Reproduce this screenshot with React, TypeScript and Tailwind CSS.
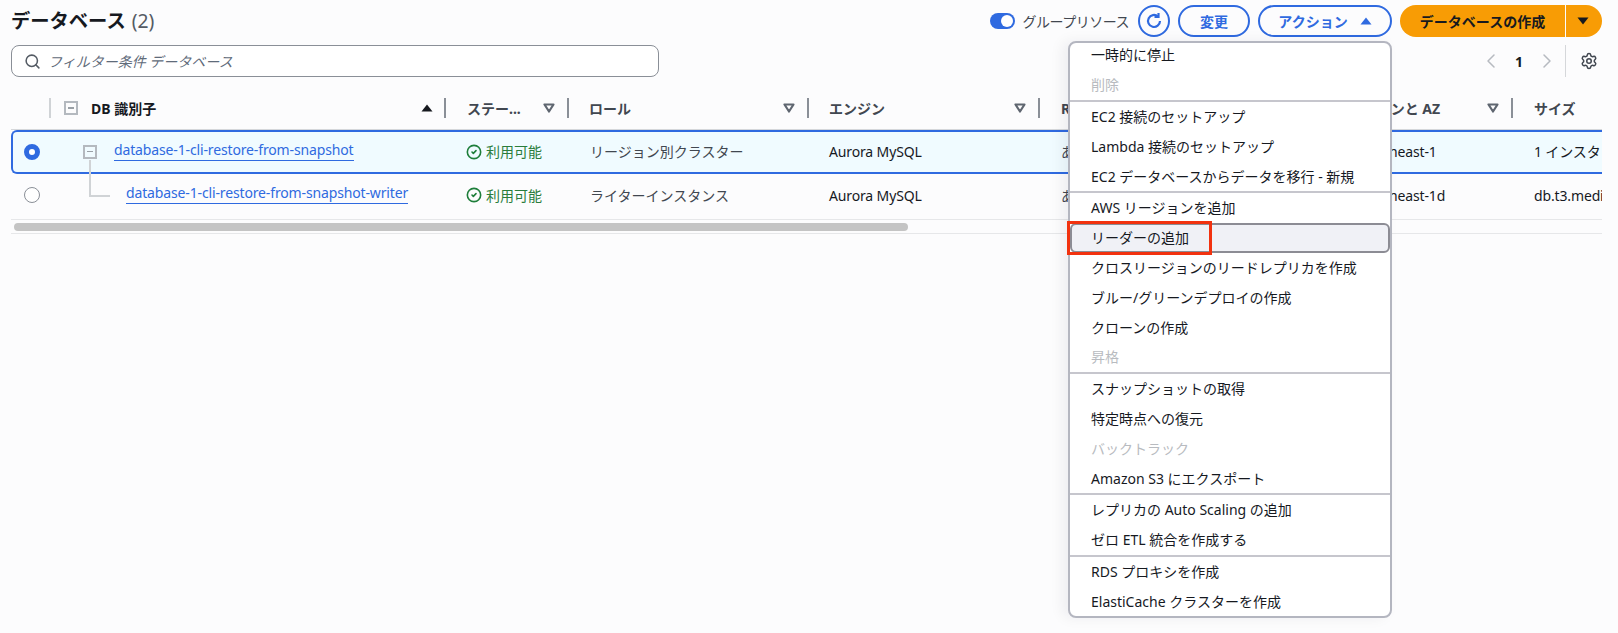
import { ChevronLeft, ChevronRight, Search, Settings, CircleCheck } from 'lucide-react'

const font = { className: "font-['Noto_Sans','Noto_Sans_CJK_JP',sans-serif]" }

const columns = [
  { label: 'ステー...', width: 'w-[123px]', pad: 'pl-[21px]' },
  { label: 'ロール', width: 'w-[240px]', pad: 'pl-[20px]' },
  { label: 'エンジン', width: 'w-[231px]', pad: 'pl-[20px]' },
  { label: 'R', width: 'w-[271px]', pad: 'pl-[21px]' },
  { label: 'リージョンと AZ', width: 'w-[202px]', pad: 'pl-[24px]' },
]

const menuGroups = [
  [{ label: '一時的に停止' }, { label: '削除', disabled: true }],
  [
    { label: 'EC2 接続のセットアップ' },
    { label: 'Lambda 接続のセットアップ' },
    { label: 'EC2 データベースからデータを移行 - 新規' },
  ],
  [
    { label: 'AWS リージョンを追加' },
    { label: 'リーダーの追加', hover: true },
    { label: 'クロスリージョンのリードレプリカを作成' },
    { label: 'ブルー/グリーンデプロイの作成' },
    { label: 'クローンの作成' },
    { label: '昇格', disabled: true },
  ],
  [
    { label: 'スナップショットの取得' },
    { label: '特定時点への復元' },
    { label: 'バックトラック', disabled: true },
    { label: 'Amazon S3 にエクスポート' },
  ],
  [{ label: 'レプリカの Auto Scaling の追加' }, { label: 'ゼロ ETL 統合を作成する' }],
  [{ label: 'RDS プロキシを作成' }, { label: 'ElastiCache クラスターを作成' }],
]

function SortDown() {
  return (
    <svg width="12" height="10" viewBox="0 0 12 10" className="text-[#5f6670]">
      <path d="M1.5 1.5h9L6 8.5z" fill="none" stroke="currentColor" strokeWidth="2.2" strokeLinejoin="round" />
    </svg>
  )
}

function Triangle({ up, className }: { up?: boolean; className?: string }) {
  return (
    <svg width="12" height="8" viewBox="0 0 12 8" className={className}>
      <path d={up ? 'M6 0.5l5.5 7H.5z' : 'M.5.5h11L6 7.5z'} fill="currentColor" />
    </svg>
  )
}

function ExpandBox({ className }: { className?: string }) {
  return (
    <span className={`flex h-[14px] w-[14px] items-center justify-center border-2 border-[#b4b9bf] ${className ?? ''}`}>
      <span className="h-[1.5px] w-[6px] bg-[#9aa0a6]" />
    </span>
  )
}

function Row({
  selected,
  radio,
  name,
  role,
  region,
  size,
}: {
  selected?: boolean
  radio: React.ReactNode
  name: React.ReactNode
  role: string
  region: string
  size: string
}) {
  return (
    <div
      className={`flex items-center text-[14px] text-[#16191f] ${
        selected
          ? 'relative z-10 h-[44px] rounded-l-[6px] border-y-2 border-l-2 border-[#2f6ae0] bg-[#f0fbff] pb-[1px]'
          : 'h-[46px] border-b border-[#e6e7e9] pb-[3px]'
      }`}
    >
      {radio}
      {name}
      <div className="flex w-[123px] items-center gap-[3px] pl-[20px]">
        <CircleCheck size={16} strokeWidth={2.4} className="text-[#1e7e3a]" />
        <span className="ml-[1px] text-[#2a7d3c]">利用可能</span>
      </div>
      <div className="w-[240px] pl-[21px] text-[#414750]">{role}</div>
      <div className="w-[231px] pl-[20px] tracking-[-0.14px] text-[#16191f]">Aurora MySQL</div>
      <div className="w-[271px] pl-[21px] text-[#414750]">あり</div>
      <div className="w-[202px] pl-[30px] tracking-[-0.14px] whitespace-nowrap">{region}</div>
      <div className="min-w-0 flex-1 overflow-hidden pl-[21px] tracking-[-0.14px] whitespace-nowrap">{size}</div>
    </div>
  )
}

export default function App() {
  return (
    <div className={`relative h-[633px] w-[1618px] overflow-hidden bg-[#fcfcfd] pl-[11px] pr-[16px] ${font.className}`}>
      {/* Top bar */}
      <div className="flex h-[45px] items-center justify-between pb-[3px]">
        <h1 className="text-[19.3px] font-bold text-[#16191f]">
          データベース <span className="ml-[1px] font-normal text-[#545b64]">(2)</span>
        </h1>
        <div className="flex items-center text-[14px]">
          <span className="flex h-[16px] w-[25px] items-center justify-end rounded-full bg-[#2f6ae0] pr-[2px]">
            <span className="h-[12px] w-[12px] rounded-full bg-white" />
          </span>
          <span className="ml-[8px] tracking-[-0.5px] text-[#414750]">グループリソース</span>
          <button className="ml-[9px] flex h-[32px] w-[32px] items-center justify-center rounded-full border-2 border-[#2f6ae0] text-[#2f6ae0]">
            <svg width="18" height="18" viewBox="0 0 18 18" fill="none" stroke="currentColor" strokeWidth="2.2">
              <path d="M15 9a6 6 0 1 1-2-4.5" />
              <path d="M13.5 1v4h-4" />
            </svg>
          </button>
          <button className="ml-[8px] h-[32px] w-[72px] rounded-full border-2 border-[#2f6ae0] font-bold text-[#2f6ae0]">変更</button>
          <button className="ml-[8px] flex h-[32px] w-[134px] items-center justify-center gap-[12px] rounded-full border-2 border-[#2f6ae0] font-bold text-[#2f6ae0]">
            アクション
            <Triangle up />
          </button>
          <div className="ml-[8px] flex h-[32px] font-bold text-[#16191f]">
            <button className="w-[165px] rounded-l-full bg-[#f89c05]">データベースの作成</button>
            <button className="ml-[1px] flex w-[36px] items-center justify-center rounded-r-full bg-[#f89c05] pr-[2px]">
              <Triangle />
            </button>
          </div>
        </div>
      </div>

      {/* Filter */}
      <div className="flex h-[32px] items-center justify-between">
        <div className="flex h-[32px] w-[648px] items-center gap-[7px] rounded-[8px] border border-[#8a8f97] bg-white px-[12px]">
          <Search size={17} strokeWidth={2.2} className="text-[#545b64]" />
          <span className="text-[14px] text-[#5f6b7a] italic">フィルター条件 データベース</span>
        </div>
        <div className="flex items-center pr-[4px] text-[#b6bac0]">
          <ChevronLeft size={24} strokeWidth={1.5} />
          <span className="mx-[12px] text-[14px] font-bold text-[#16191f]">1</span>
          <ChevronRight size={24} strokeWidth={1.5} />
          <span className="mr-[14px] ml-[6px] h-[32px] w-px bg-[#d5d7da]" />
          <Settings size={18} strokeWidth={2} className="text-[#414750]" />
        </div>
      </div>

      {/* Table */}
      <div className="mt-[10px] overflow-hidden">
        <div className="flex h-[43px] items-center border-b border-[#d5d7da] text-[14px] font-bold text-[#414750]">
          <div className="my-[11px] w-[40px] self-stretch">
            <div className="ml-auto h-full w-[2px] bg-[#d0d3d6]" />
          </div>
          <div className="my-[11px] flex w-[395px] items-center self-stretch border-r-2 border-[#8a8f97] pr-[11px] pl-[13px]">
            <ExpandBox />
            <span className="ml-[13px] text-[#16191f]">DB 識別子</span>
            <Triangle up className="ml-auto text-[#16191f]" />
          </div>
          {columns.map((col) => (
            <div key={col.label} className={`my-[11px] flex items-center self-stretch border-r-2 border-[#8a8f97] pr-[12px] whitespace-nowrap ${col.width} ${col.pad}`}>
              <span>{col.label}</span>
              <span className="ml-auto">
                <SortDown />
              </span>
            </div>
          ))}
          <div className="pl-[21px]">サイズ</div>
        </div>

        <Row
          selected
          radio={
            <div className="flex w-[38px] justify-center">
              <span className="h-[16px] w-[16px] rounded-full border-[5px] border-[#2f6ae0] bg-white" />
            </div>
          }
          name={
            <div className="relative flex h-full w-[395px] items-center">
              <ExpandBox className="ml-[32px]" />
              <span className="absolute top-[28px] -bottom-[3px] left-[38px] w-[2px] bg-[#d0d3d6]" />
              <a className="-mt-[3px] ml-[17px] border-b border-[#2f6ae0] leading-[20px] tracking-[-0.14px] text-[#2f6ae0]">database-1-cli-restore-from-snapshot</a>
            </div>
          }
          role="リージョン別クラスター"
          region="ap-northeast-1"
          size="1 インスタンス"
        />
        <Row
          radio={
            <div className="flex w-[40px] justify-center pl-[1px]">
              <span className="h-[16px] w-[16px] rounded-full border border-[#8a8f97] bg-white" />
            </div>
          }
          name={
            <div className="relative flex h-full w-[395px] items-center">
              <span className="absolute top-0 left-[38px] h-[23px] w-[21px] border-b-2 border-l-2 border-[#d0d3d6]" />
              <a className="-mt-[3px] ml-[75px] border-b border-[#2f6ae0] leading-[20px] tracking-[-0.14px] text-[#2f6ae0]">database-1-cli-restore-from-snapshot-writer</a>
            </div>
          }
          role="ライターインスタンス"
          region="ap-northeast-1d"
          size="db.t3.medium"
        />

        {/* Scrollbar */}
        <div className="flex h-[14px] items-center border-b border-[#e6e7e9] pl-[3px]">
          <div className="h-[8px] w-[894px] rounded-full bg-[#c4c4c4]" />
        </div>
      </div>

      {/* Actions dropdown */}
      <div className="absolute top-[41px] left-[1068px] z-20 w-[324px] rounded-[8px] border-2 border-[#b4b6c0] bg-white text-[14px] text-[#16191f] shadow-[-6px_0_14px_rgba(0,0,50,0.06)]">
        {menuGroups.map((group, i) => (
          <div key={i} className={i > 0 ? 'border-t-2 border-[#c6c6cd]' : '-mt-[3px]'}>
            {group.map((item) => (
              <div
                key={item.label}
                className={`relative flex h-[29.8px] items-center whitespace-nowrap ${
                  item.disabled ? 'text-[#b8bbc0]' : ''
                } ${item.hover ? 'rounded-[6px] border-2 border-[#8c8c94] bg-[#f0f1f6] pl-[19px]' : 'pl-[21px]'}`}
              >
                {item.label}
                {item.hover && <span className="absolute -top-[4px] -bottom-[4px] -left-[5px] w-[145px] border-[3px] border-[#f2320f]" />}
              </div>
            ))}
          </div>
        ))}
      </div>
    </div>
  )
}
